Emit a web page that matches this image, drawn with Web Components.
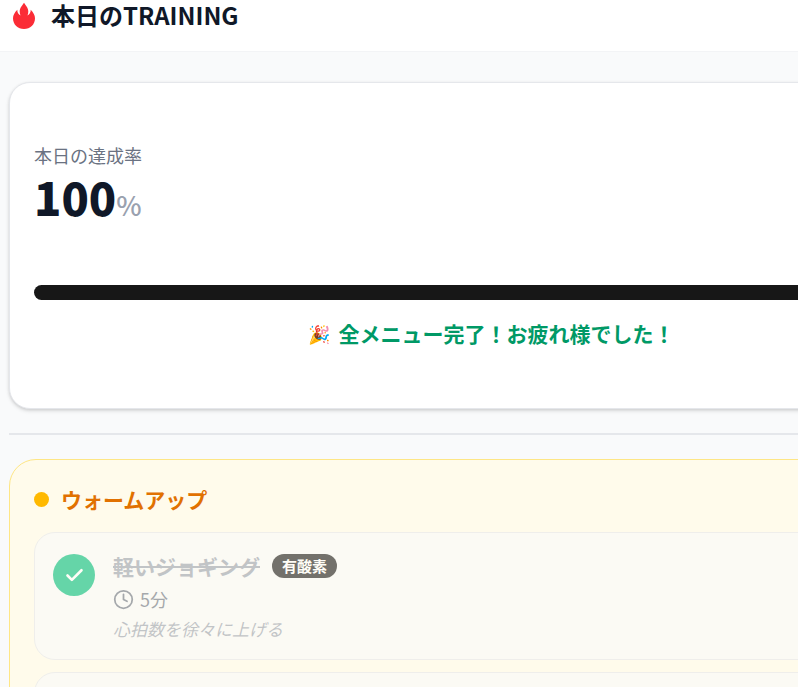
<!DOCTYPE html>
<html lang="ja">
<head>
<meta charset="UTF-8">
<meta name="viewport" content="width=device-width, initial-scale=1.0">
<title>本日のTRAINING</title>
<style>
html {
    overflow: hidden;
}

body {
    margin: 0;
    background: #f9fafb;
    color: #101828;
    font-family: "Noto Sans CJK JP", "Noto Color Emoji", sans-serif;
    font-size: 18px;
    line-height: 24px;
}
</style>
</head>
<body>
<training-page>
    <training-header slot="header">本日のTRAINING</training-header>
    <progress-card value="100" label="本日の達成率" icon="🎉">全メニュー完了！お疲れ様でした！</progress-card>
    <menu-section heading="ウォームアップ">
        <menu-item name="軽いジョギング" tag="有酸素" time="5分">心拍数を徐々に上げる</menu-item>
        <menu-item></menu-item>
    </menu-section>
</training-page>

<template id="training-page">
<style>
:host {
    display: block;
}

/* the content column is wider than a small window and runs off to the right */
main {
    display: flex;
    flex-direction: column;
    gap: 24px;
    min-width: 122%;
    box-sizing: border-box;
    width: max-content;
    padding: 30px 0 36px 9px;
}
</style>
<slot name="header"></slot>
<main><slot></slot></main>
</template>

<template id="training-header">
<style>
:host {
    display: block;
    background: #fff;
    border-bottom: 1px solid #f3f4f6;
}

h1 {
    display: flex;
    align-items: center;
    gap: 12px;
    margin: 0;
    padding: 0 9px 21px;
    font-size: 24px;
    font-weight: 700;
    line-height: 30px;
}

svg {
    width: 30px;
    height: 30px;
    fill: #fb2c36;
}
</style>
<h1>
    <svg viewBox="0 0 30 30" aria-hidden="true"><path d="M15 2.800c1.200 2.200 4.300 4.700 4.300 8.700 0 1.300-.3 2.500-.8 3.900 2-.9 3.300-2.800 3.200-5.700 2.700 2.700 4.300 5.600 4.300 8.500C26 24.400 21.200 29 15 29S4 24.400 4 18.200c0-2.900 1.600-5.800 4.300-8.500-.1 2.900 1.200 4.800 3.200 5.700-.5-1.400-.8-2.600-.8-3.900 0-4 3.100-6.500 4.300-8.700z"/></svg>
    <span><slot></slot></span>
</h1>
</template>

<template id="progress-card">
<style>
:host {
    display: block;
    box-sizing: border-box;
    padding: 60px 24px;
    background: #fff;
    border: 1px solid #e5e7eb;
    border-radius: 21px;
    box-shadow: 0 2px 4px rgba(0, 0, 0, .1), 0 1px 3px rgba(0, 0, 0, .1);
}

.label {
    display: block;
    color: #6a7282;
}

.value {
    margin: 0 0 50px;
    font-size: 45px;
    font-weight: 900;
    line-height: 60px;
}

.unit {
    color: #99a1af;
    font-size: 27px;
    font-weight: 500;
}

.track {
    height: 15px;
    overflow: hidden;
    background: #e5e7eb;
    border-radius: 8px;
}

.bar {
    height: 100%;
    background: #171717;
}

.message {
    display: flex;
    align-items: center;
    justify-content: center;
    gap: 8px;
    margin: 18px 0 0;
    color: #009966;
    font-size: 21px;
    font-weight: 700;
    line-height: 30px;
}

.icon {
    font-size: 18px;
}
</style>
<span class="label" id="label"></span>
<p class="value"><span class="number"></span><span class="unit">%</span></p>
<div class="track" role="progressbar" aria-labelledby="label" aria-valuemin="0" aria-valuemax="100"><div class="bar"></div></div>
<p class="message"><span class="icon"></span><span><slot></slot></span></p>
</template>

<template id="menu-section">
<style>
:host {
    display: block;
}

hr {
    height: 2px;
    margin: 0 0 24px;
    background: #e5e7eb;
    border: 0;
}

section {
    padding: 24px;
    background: #fffbeb;
    border: 1px solid #fee685;
    border-radius: 27px;
}

h2 {
    display: flex;
    align-items: center;
    gap: 12px;
    margin: 0 0 18px;
    color: #e17100;
    font-size: 21px;
    font-weight: 700;
    line-height: 30px;
}

h2::before {
    content: "";
    width: 15px;
    height: 15px;
    background: #ffb900;
    border-radius: 50%;
}

.items {
    display: grid;
    gap: 12px;
}
</style>
<hr>
<section>
    <h2></h2>
    <div class="items"><slot></slot></div>
</section>
</template>

<template id="menu-item">
<style>
:host {
    display: flex;
    gap: 18px;
    min-height: 90px;
    padding: 18px;
    background: #f9fafb;
    border: 1px solid #e5e7eb;
    border-radius: 21px;
    opacity: .6;
}

button {
    display: flex;
    flex: none;
    align-items: center;
    justify-content: center;
    width: 42px;
    height: 42px;
    margin-top: 3px;
    padding: 0;
    background: #00bc7d;
    border: 0;
    border-radius: 50%;
    cursor: pointer;
}

svg {
    width: 21px;
    height: 21px;
    fill: none;
    stroke: currentColor;
    stroke-width: 2;
    stroke-linecap: round;
    stroke-linejoin: round;
}

button svg {
    color: #fff;
    stroke-width: 3;
}

.name {
    display: flex;
    align-items: center;
    gap: 12px;
    color: #99a1af;
}

h3 {
    margin: 0;
    font-size: 21px;
    font-weight: 700;
    line-height: 30px;
    text-decoration: line-through;
}

.tag {
    padding: 0 10px;
    background: #171717;
    border-radius: 12px;
    color: #fff;
    font-size: 15px;
    font-weight: 700;
}

.time {
    display: flex;
    align-items: center;
    gap: 6px;
    margin: 6px 0;
    color: #6a7282;
}

.note {
    margin: 0;
    color: #99a1af;
    font-size: 17px;
    font-style: italic;
}
</style>
<button type="button" aria-label="完了"><svg viewBox="0 0 24 24"><path d="M20 6 9 17l-5-5"/></svg></button>
<div class="text">
    <div class="name"><h3></h3><span class="tag"></span></div>
    <p class="time"><svg viewBox="0 0 24 24"><circle cx="12" cy="12" r="10"/><path d="M12 6v6l4 2"/></svg><span></span></p>
    <p class="note"><slot></slot></p>
</div>
</template>

<script>
class BaseElement extends HTMLElement {
    constructor() {
        super();
        const template = document.getElementById(this.localName);
        this.attachShadow({ mode: "open" }).appendChild(template.content.cloneNode(true));
    }
    $(selector) {
        return this.shadowRoot.querySelector(selector);
    }
}

class TrainingPage extends BaseElement {}

class TrainingHeader extends BaseElement {}

class ProgressCard extends BaseElement {
    connectedCallback() {
        const value = this.getAttribute("value");
        this.$(".label").textContent = this.getAttribute("label");
        this.$(".number").textContent = value;
        this.$(".icon").textContent = this.getAttribute("icon");
        this.$(".track").setAttribute("aria-valuenow", value);
        this.$(".bar").style.width = value + "%";
    }
}

class MenuSection extends BaseElement {
    connectedCallback() {
        this.$("h2").textContent = this.getAttribute("heading");
    }
}

class MenuItem extends BaseElement {
    connectedCallback() {
        // an item without a name is only an empty card
        if (!this.hasAttribute("name")) {
            this.$("button").remove();
            this.$(".text").remove();
            return;
        }
        this.$("h3").textContent = this.getAttribute("name");
        this.$(".tag").textContent = this.getAttribute("tag");
        this.$(".time span").textContent = this.getAttribute("time");
        this.$("button").onclick = () => {
            this.dispatchEvent(new CustomEvent("toggle-item", { bubbles: true }));
        };
    }
}

customElements.define("training-page", TrainingPage);
customElements.define("training-header", TrainingHeader);
customElements.define("progress-card", ProgressCard);
customElements.define("menu-section", MenuSection);
customElements.define("menu-item", MenuItem);
</script>
</body>
</html>
